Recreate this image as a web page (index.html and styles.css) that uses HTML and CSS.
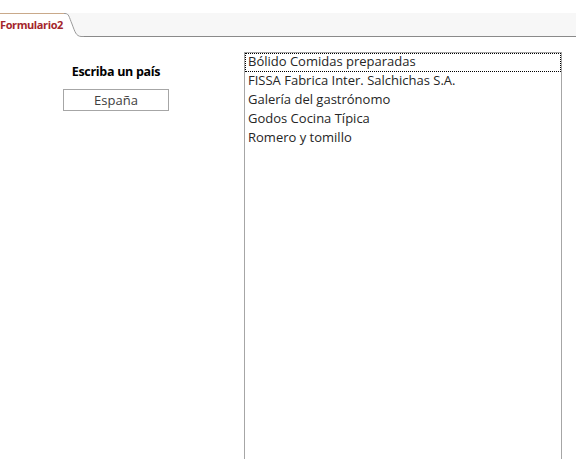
FILE: index.html
```html
<!DOCTYPE html>
<html lang="es">
<head>
  <meta charset="UTF-8">
  <title>Formulario2</title>
  <link rel="stylesheet" href="styles.css">
</head>
<body>
  <div class="tabbar">
    <div class="tab">
      <span class="tab-label">Formulario2</span>
      <svg class="tab-edge" width="20" height="24" viewBox="0 0 20 24">
        <path d="M0 0 H1 C5 0 5 4 8 11 C11 19 12 23 17 23 H20 V24 H0 Z" fill="#fff"/>
        <path d="M0 0.5 H1 C5 0.5 5 4 8 11 C11 19 12 23 17 23.5 H20" fill="none" stroke="#9a9a9a" stroke-width="1"/>
      </svg>
    </div>
  </div>

  <main class="form">
    <div class="left">
      <label class="caption" for="pais">Escriba un país</label>
      <input id="pais" class="textbox" type="text" value="España">
    </div>

    <ul class="listbox">
      <li class="selected">Bólido Comidas preparadas</li>
      <li>FISSA Fabrica Inter. Salchichas S.A.</li>
      <li>Galería del gastrónomo</li>
      <li>Godos Cocina Típica</li>
      <li>Romero y tomillo</li>
    </ul>
  </main>
</body>
</html>
```

FILE: styles.css
```css
body {
  margin: 0;
  font-family: 'Open Sans', 'Noto Sans', sans-serif;
  background-color: #fff;
  overflow: hidden;
}

.tabbar {
  margin-top: 13px;
  height: 23px;
  background-color: #f7f7f7;
  border-bottom: 1px solid #8a8a8a;
  display: flex;
}

.tab {
  display: flex;
  height: 24px;
  margin-bottom: -1px;
}

.tab-label {
  background-color: #fff;
  border-top: 1px solid #c9a98a; /* borde dorado de la pestaña */
  color: #a4262c;
  font-size: 11px;
  font-weight: bold;
  line-height: 22px;
  padding-right: 1px;
  letter-spacing: -0.4px;
}

.tab-edge {
  display: block;
}

.form {
  display: flex;
  height: 424px;
}

.left {
  width: 244px;
  display: flex;
  flex-direction: column;
  align-items: center;
  padding-top: 26px;
  padding-right: 12px;
  box-sizing: border-box;
}

.caption {
  font-size: 12.5px;
  font-weight: bold;
  color: #000;
  line-height: 18px;
  letter-spacing: -0.3px;
}

.textbox {
  margin-top: 8px;
  width: 106px;
  height: 22px;
  box-sizing: border-box;
  border: 1px solid #a6a6a6;
  font-family: inherit;
  font-size: 13px;
  color: #404040;
  text-align: center;
  padding: 0;
}

.listbox {
  list-style: none;
  margin: 15px 0 0 0;
  padding: 0;
  width: 318px;
  height: 420px;
  box-sizing: border-box;
  border: 1px solid #a6a6a6;
  border-bottom: none;
}

.listbox li {
  height: 19px;
  line-height: 16px;
  padding-left: 3px;
  font-size: 13px;
  color: #262626;
  box-sizing: border-box;
}

.listbox li.selected {
  outline: 1px dotted #000;
  outline-offset: -1px;
}
```
